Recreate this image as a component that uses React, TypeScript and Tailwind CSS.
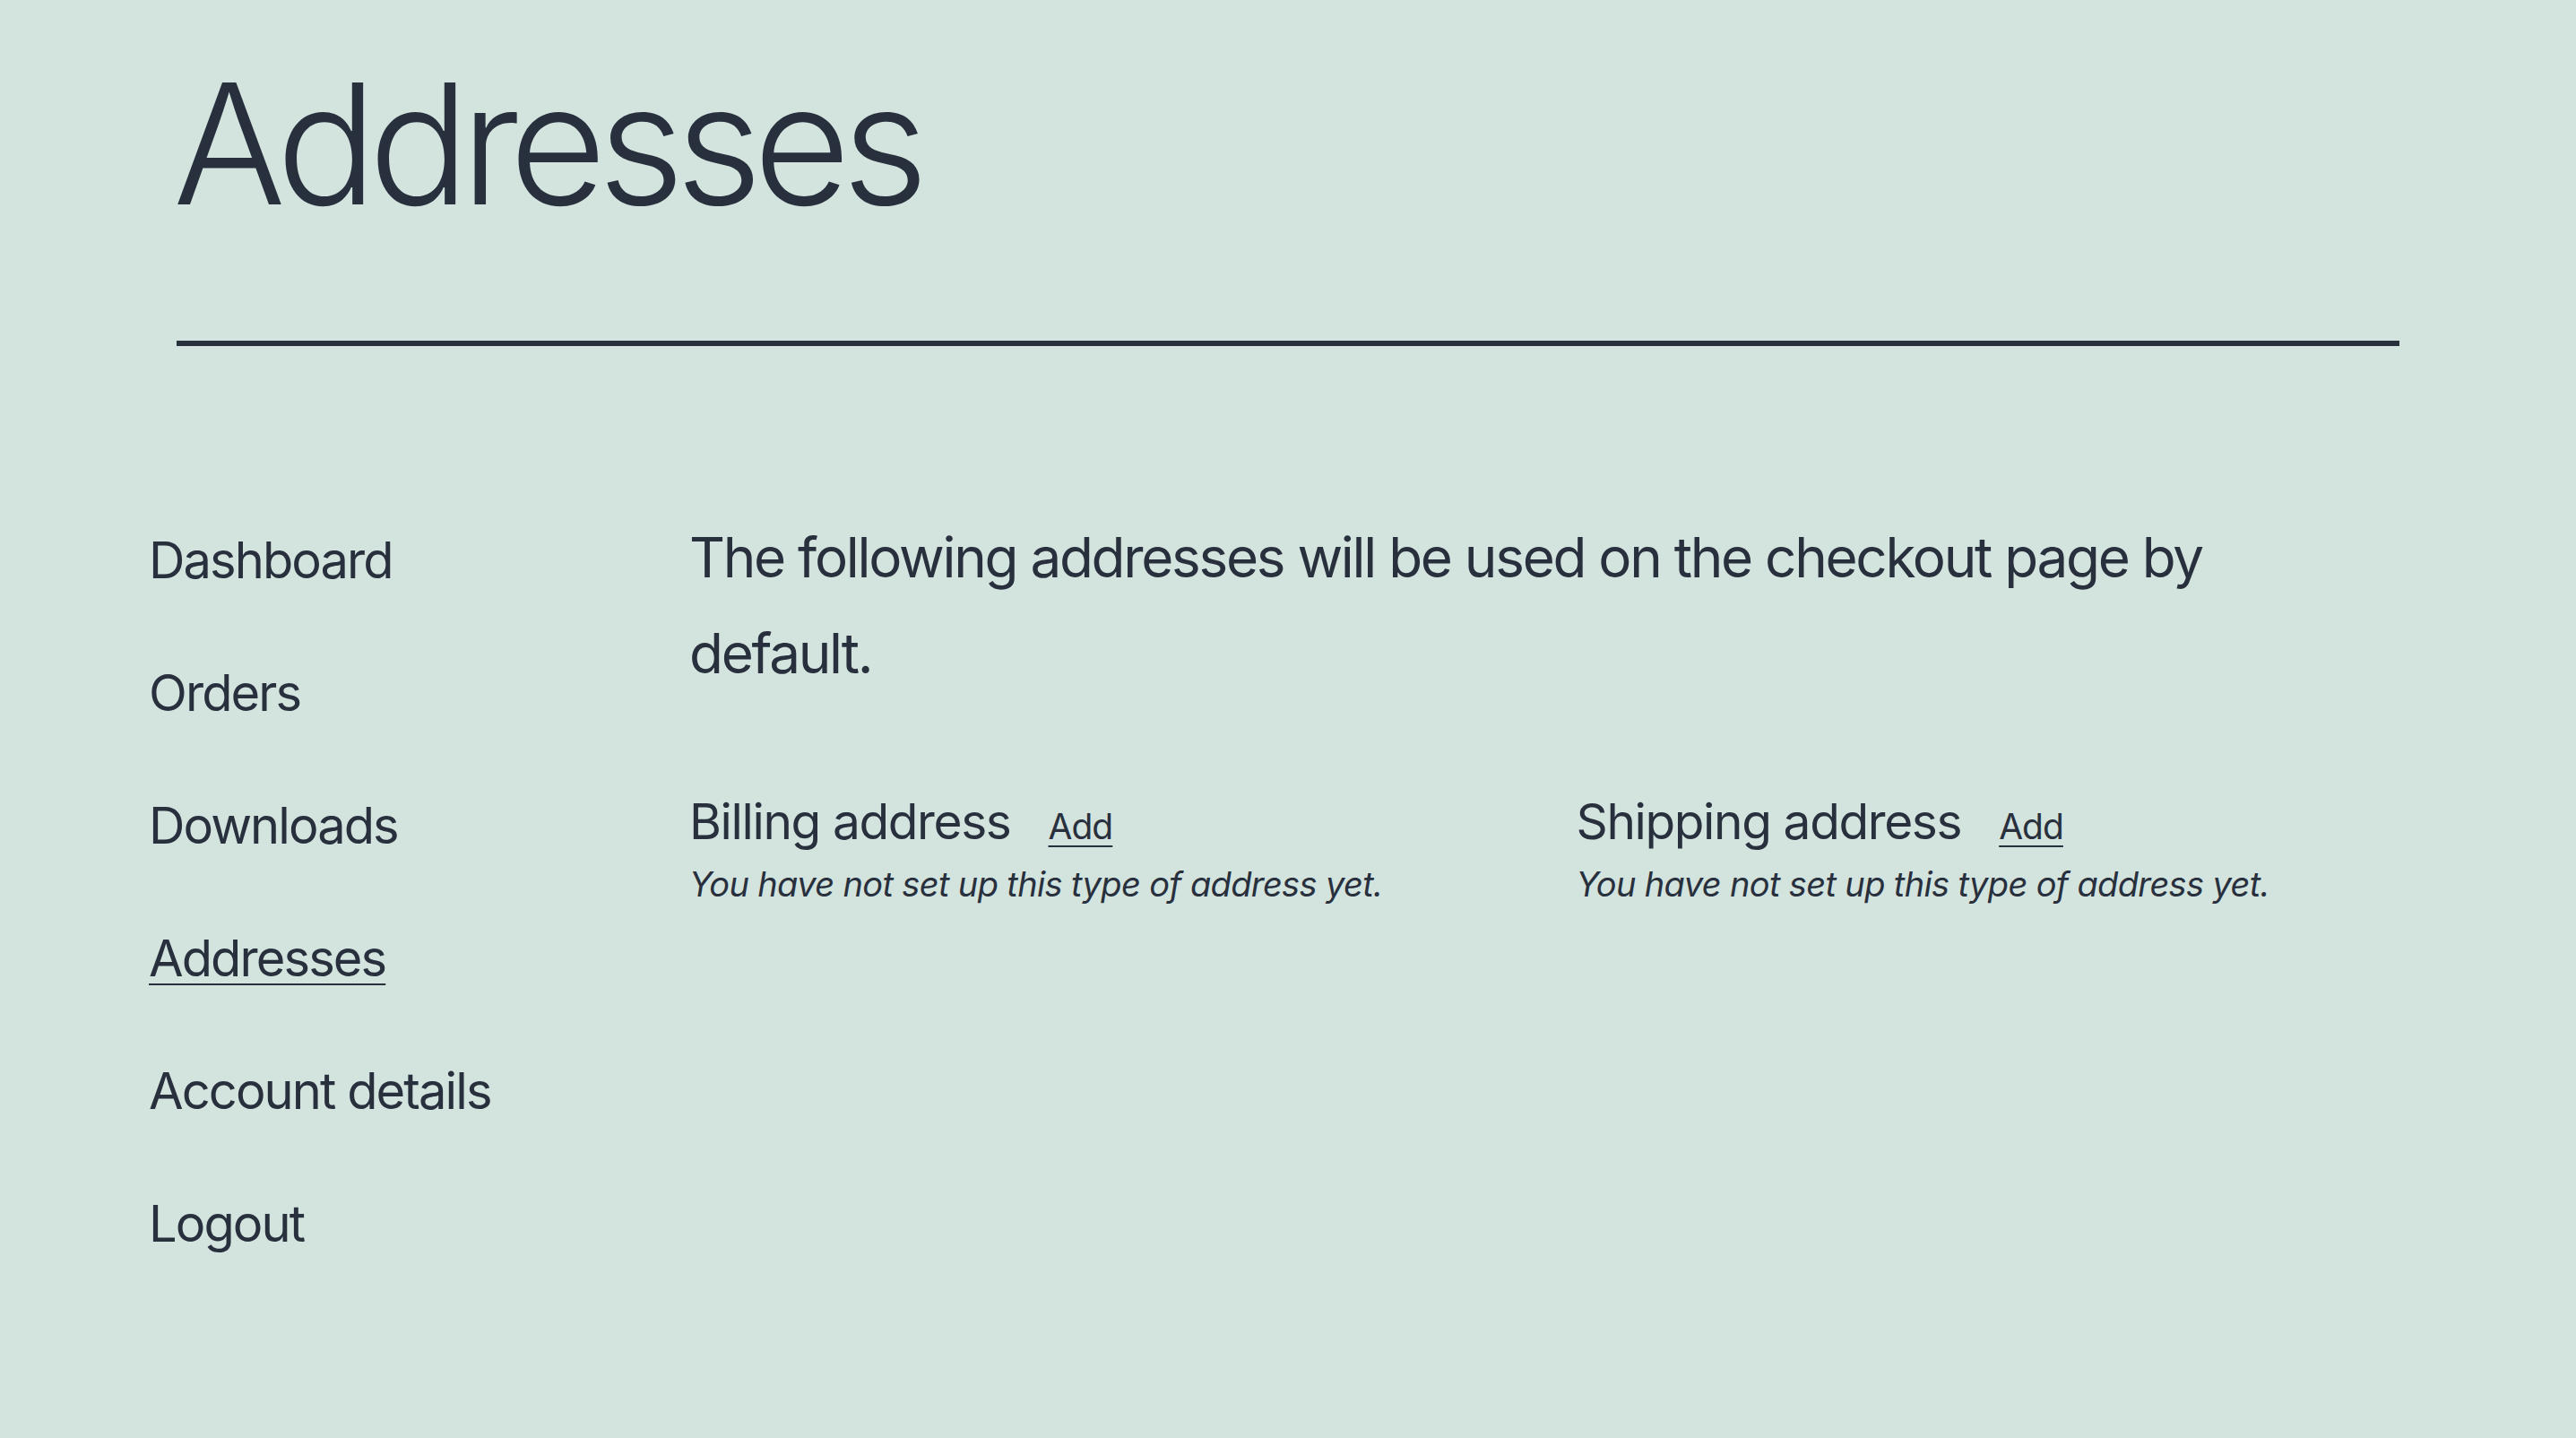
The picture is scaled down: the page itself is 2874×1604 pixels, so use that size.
const navItems = [
  { label: "Dashboard", active: false },
  { label: "Orders", active: false },
  { label: "Downloads", active: false },
  { label: "Addresses", active: true },
  { label: "Account details", active: false },
  { label: "Logout", active: false },
];

function AddressBlock({ title }: { title: string }) {
  return (
    <div className="flex flex-col">
      <div className="flex items-baseline">
        <h2 className="text-[55px] leading-[66px] font-normal tracking-[-0.025em]">{title}</h2>
        <a href="#" className="ml-[42px] text-[39px] underline underline-offset-[7px] decoration-[2px] tracking-[-0.025em]">
          Add
        </a>
      </div>
      <p className="mt-[6px] text-[38px] leading-[57px] italic tracking-[-0.017em]">
        You have not set up this type of address yet.
      </p>
    </div>
  );
}

export default function App() {
  return (
    <div className="min-h-screen bg-[#d3e3de] text-[#28303d] font-['Inter','Liberation_Sans',sans-serif]">
      {/* Header */}
      <header className="mx-auto w-[2480px] pt-[67px]">
        <h1 className="-ml-[4px] text-[187px] leading-none font-light tracking-[-0.052em]">Addresses</h1>
        <div className="mt-[126px] h-[6px] bg-[#28303d]" />
      </header>

      {/* Account area */}
      <div className="flex pl-[166px] pr-[200px] mt-[165px]">
        <nav className="w-[603px] shrink-0 flex flex-col">
          {navItems.map(({ label, active }) => (
            <a
              key={label}
              href="#"
              className={
                active
                  ? "text-[56px] leading-[148px] tracking-[-0.034em] underline decoration-[2px] underline-offset-[8px]"
                  : "text-[56px] leading-[148px] tracking-[-0.034em]"
              }
            >
              {label}
            </a>
          ))}
        </nav>

        <main className="flex-1 pt-[17px]">
          <p className="text-[62px] leading-[107px] tracking-[-0.037em]">
            The following addresses will be used on the checkout page by default.
          </p>
          <div className="mt-[101px] grid grid-cols-2 gap-x-[74px]">
            <AddressBlock title="Billing address" />
            <AddressBlock title="Shipping address" />
          </div>
        </main>
      </div>
    </div>
  );
}
